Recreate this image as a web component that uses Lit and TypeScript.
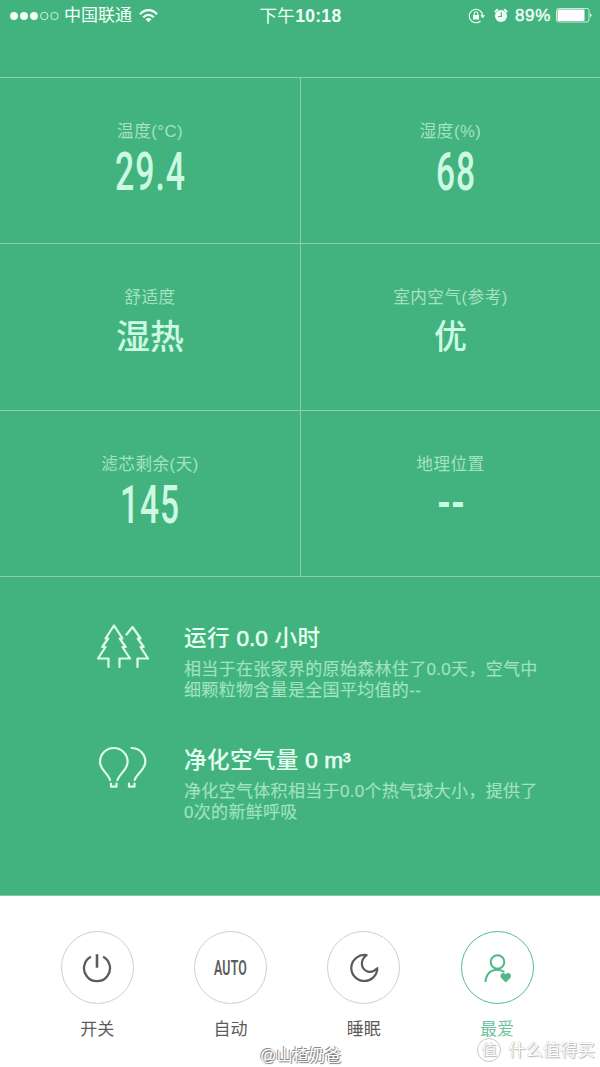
import { LitElement, html, css, svg } from "lit";
import { customElement, property } from "lit/decorators.js";

@customElement("fit-text")
class FitText extends LitElement {
  @property() text = "";
  @property({ type: Number }) w = 60;
  @property({ type: Number }) h = 40;
  @property({ type: Number }) size = 50;
  @property({ type: Number }) weight = 400;
  @property({ type: Number }) base = 40;
  @property({ type: Number }) gap = 0;

  static styles = css`
    :host { display: block; }
    svg { display: block; overflow: visible; }
    text { font-family: Roboto, "Noto Sans CJK SC", sans-serif; fill: currentColor; }
  `;

  render() {
    return html`<svg width=${this.w} height=${this.h}>
      ${svg`<text x="0" y=${this.base} font-size=${this.size} font-weight=${this.weight} letter-spacing=${this.gap}
        textLength=${this.w} lengthAdjust="spacingAndGlyphs">${this.text}</text>`}
    </svg>`;
  }
}

const metrics = [
  { label: "温度(°C)", text: "29.4", w: 71, size: 53, weight: 500, base: 39, gap: 1.5 },
  { label: "湿度(%)", text: "68", w: 40, size: 53, weight: 500, base: 39, gap: 1.5, shifted: true },
  { label: "舒适度", text: "湿热", w: 68, size: 34, weight: 500, base: 32, gap: 0 },
  { label: "室内空气(参考)", text: "优", w: 33, size: 34, weight: 500, base: 32, gap: 0 },
  { label: "滤芯剩余(天)", text: "145", w: 60, size: 53, weight: 500, base: 39, gap: 1.5 },
  { label: "地理位置", text: "--", w: 28, size: 44, weight: 700, base: 34, gap: 0 },
];

const trees = svg`<svg width="54" height="48" viewBox="0 0 54 48" fill="none" stroke="#dcfbea" stroke-width="2.200" stroke-linejoin="round" stroke-linecap="round">
  <path d="M12.500 43v-8.500H2l7.500-11.500H6.200l6-8.500H9.500L18 1.500l8.500 13h-2.800l6 8.500h-3.200L34 34.500H23.500v8.500"/>
  <path d="M30.500 10.500 36.500 3 44.500 14.500h-2.800l6 8.500h-3.200L52 34.500H41.500v8.500"/>
</svg>`;

const balloons = svg`<svg width="54" height="46" viewBox="0 0 54 46" fill="none" stroke="#dcfbea" stroke-width="2.200" stroke-linecap="round" stroke-linejoin="round">
  <path d="M14 34C12.500 27.500 4 24 4 15.800a13.800 13.800 0 0 1 27.600 0C31.600 24 23.500 27.500 21.500 34"/>
  <path d="M15 37.500v3.200h5.500v-3.200"/>
  <path d="M35.500 2c8 0 13.800 6.200 13.800 13.800C49.300 24 40.500 27.500 38.700 34"/>
  <path d="M33 37.500v3.200h5.500v-3.200"/>
</svg>`;

const power = svg`<svg width="30" height="30" viewBox="0 0 30 30" fill="none" stroke="#5a5a5a" stroke-width="2.300">
  <path d="M8.900 3.700A13 13 0 1 0 21.100 3.700" /><path d="M15 1.200v13.500" stroke-width="2.600"/>
</svg>`;

const moon = svg`<svg width="30" height="30" viewBox="0 0 30 30" fill="none" stroke="#5a5a5a" stroke-width="2.200" stroke-linejoin="round">
  <path d="M17.600 2.200A13 13 0 1 0 28.300 15.200C25.500 18 22.500 20 18.500 18.400C11.500 15.500 10.800 7.500 17.600 2.200Z"/>
</svg>`;

const favourite = svg`<svg width="30" height="30" viewBox="0 0 30 30" fill="none" stroke="#4fb98a" stroke-width="2">
  <circle cx="15.500" cy="9" r="6.800"/><path d="M3.500 29c.3-7.500 5-12.300 11.500-12.300 3 0 5.300.8 7.300 2.300"/>
  <path stroke="none" fill="#4fb98a" d="M23.700 29.500l-4.300-4.300c-3-3.400 1.600-7 4.300-3.900 2.700-3.100 7.300.5 4.300 3.900z"/>
</svg>`;

const modes = [
  { name: "开关", icon: power },
  { name: "自动", icon: html`<fit-text text="AUTO" w="33" h="15" size="19.500" weight="600" gap=".3" base="14.500"></fit-text>` },
  { name: "睡眠", icon: moon },
  { name: "最爱", icon: favourite, on: true },
];

@customElement("app-root")
class AppRoot extends LitElement {
  static styles = css`
    :host {
      display: flex; flex-direction: column; position: relative;
      height: 1067px; width: 600px; overflow: hidden; background: #fff;
      font-family: "Liberation Sans", "Noto Sans CJK SC", sans-serif;
    }
    svg { display: block; flex: none; }
    .top { background: #42b37e; height: 895px; border-bottom: 1px solid #7dcaa5; display: flex; flex-direction: column; }
    .status { display: grid; grid-template-columns: 1fr auto 1fr; height: 31px; align-items: center; color: #f1fff8; padding: 0 8px 0 9px; font-size: 17px; box-sizing: border-box; margin-bottom: 46px; }
    .left, .right { display: flex; align-items: center; }
    .right { justify-content: flex-end; }
    .alarm { margin-left: 9px; }
    .carrier { margin: 0 7px 0 4px; line-height: 22px; padding-top: 1px; }
    .clock { line-height: 22px; font-size: 17.500px; letter-spacing: .300px; padding-top: 1px; }
    .percent { margin: 0 5px 0 7px; -webkit-text-stroke: .4px #f1fff8; letter-spacing: .7px; line-height: 22px; padding-top: 1px; }
    .grid { display: grid; grid-template-columns: 300px 299px; grid-template-rows: 165px 166px 165px; gap: 1px; background: #8ad2ae; border-top: 1px solid #8ad2ae; border-bottom: 1px solid #8ad2ae; }
    .cell { background: #42b37e; display: flex; flex-direction: column; align-items: center; padding-top: 43px; }
    .label { font-size: 16.600px; letter-spacing: .500px; line-height: 22px; color: #a5e2c4; }
    .value { height: 40px; margin-top: 8px; color: #ccf9e1; }
    .shifted { padding-left: 10px; }
    .facts { padding: 46px 50px 0 96px; display: flex; flex-direction: column; gap: 38px; }
    .fact { display: grid; grid-template-columns: 88px 1fr; height: 84px; align-items: start; }
    .pic { padding-top: 1px; }
    .title { font-size: 22.600px; letter-spacing: .350px; line-height: 32px; color: #e5fff1; font-weight: 500; white-space: pre; }
    .num { -webkit-text-stroke: .6px currentColor; letter-spacing: 0; }
    .desc { font-size: 17px; line-height: 20.500px; letter-spacing: .320px; color: #a0e2c1; padding-top: 5px; white-space: nowrap; -webkit-text-stroke: .15px currentColor; }
    .modes { display: grid; grid-template-columns: repeat(4, 133.300px); padding: 35px 0 0 30.500px; }
    .mode { display: flex; flex-direction: column; align-items: center; font-size: 17px; color: #5c5c5c; line-height: 24px; gap: 14px; }
    .ring { width: 71px; height: 71px; border: 1px solid #cfcfcf; border-radius: 50%; display: flex; align-items: center; justify-content: center; }
    .on { color: #6dc59d; }
    .on .ring { border-color: #58ba8c; }
    .author { position: absolute; left: 260px; top: 1044px; font-size: 16.200px; line-height: 22px; color: #fff; text-shadow: -1px -1px 0 #888, 1px 1px 1px #777; white-space: nowrap; }
    .site { position: absolute; left: 477px; top: 1038px; display: flex; align-items: center; gap: 7px; font-size: 17.400px; line-height: 24px; color: #fff; text-shadow: 0 0 1px #aaa, 1px 1px 1px #bbb; white-space: nowrap; }
    .seal { width: 22px; height: 22px; border: 1px solid #c8c8c8; border-radius: 50%; font-size: 15px; line-height: 22px; text-align: center; }
  `;

  render() {
    return html`
      <div class="top">
        <div class="status">
          <div class="left">
            <svg width="51" height="10" fill="#f1fff8" stroke="#f1fff8" stroke-width=".8">
              <circle cx="5" cy="5" r="3.700"/><circle cx="15" cy="5" r="3.700"/><circle cx="25" cy="5" r="3.700"/>
              <circle cx="35.300" cy="5" r="3.700" fill="none"/><circle cx="45.500" cy="5" r="3.700" fill="none"/>
            </svg>
            <span class="carrier">中国联通</span>
            <svg width="19" height="14" viewBox="0 0 19 14" fill="none" stroke="#f1fff8" stroke-width="2.200">
              <path d="M1 5.300C6-.200 13-.200 18 5.300M4.200 8.300c3.300-3.300 7.300-3.300 10.600 0"/><path d="M9.500 13.300 6.400 10.300c1.800-1.700 4.400-1.700 6.200 0z" fill="#f1fff8" stroke="none"/>
            </svg>
          </div>
          <div class="clock">下午<b>10:18</b></div>
          <div class="right">
            <svg width="17" height="16" viewBox="0 0 17 16" fill="none" stroke="#f1fff8" stroke-width="1.100">
              <path d="M12.500 13A6.700 6.700 0 1 1 14.700 8"/><path d="M12.300 7.200h4.700l-2.300 3z" fill="#f1fff8" stroke="none"/>
              <rect x="5" y="7" width="6" height="4.500" fill="#f1fff8" stroke="none"/><path d="M6.300 7V5.500a1.700 1.700 0 0 1 3.400 0V7"/>
            </svg>
            <svg class="alarm" width="14" height="15" viewBox="0 0 14 15">
              <circle cx="7" cy="8" r="6" fill="#f1fff8"/><path d="M.800 4.200 3.800 1.200M13.200 4.200 10.200 1.200" stroke="#f1fff8" stroke-width="1.800"/>
              <path d="M7.300 4.300V8.500H4" fill="none" stroke="#42b37e" stroke-width="1.200"/>
            </svg>
            <span class="percent">89%</span>
            <svg width="36" height="15" viewBox="0 0 36 15">
              <rect x=".5" y=".5" width="32.500" height="13.500" rx="2" fill="none" stroke="#c4ecd8"/>
              <rect x="1.500" y="1.500" width="27" height="11.500" rx="1" fill="#fff"/><path d="M34 5q3 2.300 0 4.500z" fill="#e0f6ea"/>
            </svg>
          </div>
        </div>
        <div class="grid">
          ${metrics.map((m) => html`<div class="cell">
            <div class="label">${m.label}</div>
            <fit-text class="value ${m.shifted ? "shifted" : ""}" .text=${m.text} .w=${m.w} .size=${m.size} .weight=${m.weight} .base=${m.base} .gap=${m.gap}></fit-text>
          </div>`)}
        </div>
        <div class="facts">
          <div class="fact">
            <div class="pic">${trees}</div>
            <div><div class="title">运行 <span class="num">0.0</span> 小时</div>
            <div class="desc">相当于在张家界的原始森林住了0.0天，空气中<br>细颗粒物含量是全国平均值的--</div></div>
          </div>
          <div class="fact">
            <div class="pic">${balloons}</div>
            <div><div class="title">净化空气量 <span class="num">0 m³</span></div>
            <div class="desc">净化空气体积相当于0.0个热气球大小，提供了<br>0次的新鲜呼吸</div></div>
          </div>
        </div>
      </div>
      <div class="modes">
        ${modes.map((m) => html`<div class="mode ${m.on ? "on" : ""}"><div class="ring">${m.icon}</div><div>${m.name}</div></div>`)}
      </div>
      <div class="author">@山楂奶爸</div>
      <div class="site"><span class="seal">值</span><span>什么值得买</span></div>
    `;
  }
}
